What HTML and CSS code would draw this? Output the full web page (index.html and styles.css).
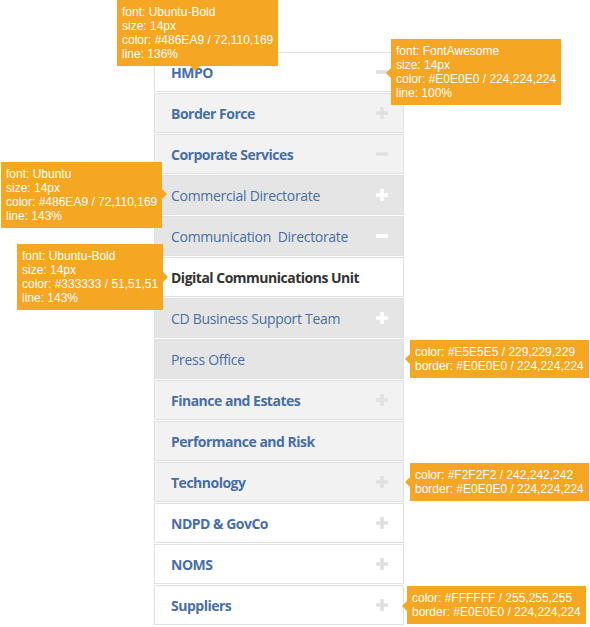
FILE: index.html
```html
<!DOCTYPE html>
<html lang="en">
<head>
<meta charset="utf-8">
<title>Menu</title>
<link rel="stylesheet" href="styles.css">
</head>
<body>
<div class="page">
  <ul class="nav">
    <li class="item bg-white"><span class="label bold">HMPO</span><svg class="ic ic-gray" viewBox="0 0 12 12"><rect y="4.2" width="12" height="3.6"/></svg></li>
    <li class="item bg-light"><span class="label bold">Border Force</span><svg class="ic ic-gray" viewBox="0 0 12 12"><path d="M4.2 0h3.6v4.2H12v3.6H7.8V12H4.2V7.8H0V4.2h4.2z"/></svg></li>
    <li class="item bg-light"><span class="label bold">Corporate Services</span><svg class="ic ic-gray" viewBox="0 0 12 12"><rect y="4.2" width="12" height="3.6"/></svg></li>
    <li class="item bg-mid"><span class="label">Commercial Directorate</span><svg class="ic ic-white" viewBox="0 0 12 12"><path d="M4.2 0h3.6v4.2H12v3.6H7.8V12H4.2V7.8H0V4.2h4.2z"/></svg></li>
    <li class="item bg-mid"><span class="label">Communication&nbsp; Directorate</span><svg class="ic ic-white" viewBox="0 0 12 12"><rect y="4.2" width="12" height="3.6"/></svg></li>
    <li class="item bg-white"><span class="label bold current">Digital Communications Unit</span></li>
    <li class="item bg-mid"><span class="label">CD Business Support Team</span><svg class="ic ic-white" viewBox="0 0 12 12"><path d="M4.2 0h3.6v4.2H12v3.6H7.8V12H4.2V7.8H0V4.2h4.2z"/></svg></li>
    <li class="item bg-mid"><span class="label">Press Office</span></li>
    <li class="item bg-light"><span class="label bold">Finance and Estates</span><svg class="ic ic-gray" viewBox="0 0 12 12"><path d="M4.2 0h3.6v4.2H12v3.6H7.8V12H4.2V7.8H0V4.2h4.2z"/></svg></li>
    <li class="item bg-light"><span class="label bold">Performance and Risk</span></li>
    <li class="item bg-light"><span class="label bold">Technology</span><svg class="ic ic-gray" viewBox="0 0 12 12"><path d="M4.2 0h3.6v4.2H12v3.6H7.8V12H4.2V7.8H0V4.2h4.2z"/></svg></li>
    <li class="item bg-white"><span class="label bold">NDPD &amp; GovCo</span><svg class="ic ic-gray" viewBox="0 0 12 12"><path d="M4.2 0h3.6v4.2H12v3.6H7.8V12H4.2V7.8H0V4.2h4.2z"/></svg></li>
    <li class="item bg-white"><span class="label bold">NOMS</span><svg class="ic ic-gray" viewBox="0 0 12 12"><path d="M4.2 0h3.6v4.2H12v3.6H7.8V12H4.2V7.8H0V4.2h4.2z"/></svg></li>
    <li class="item bg-white"><span class="label bold">Suppliers</span><svg class="ic ic-gray" viewBox="0 0 12 12"><path d="M4.2 0h3.6v4.2H12v3.6H7.8V12H4.2V7.8H0V4.2h4.2z"/></svg></li>
  </ul>

  <div class="tip tip-down t1">font: Ubuntu-Bold<br>size: 14px<br>color: #486EA9 / 72,110,169<br>line: 136%</div>
  <div class="tip tip-left t2">font: FontAwesome<br>size: 14px<br>color: #E0E0E0 / 224,224,224<br>line: 100%</div>
  <div class="tip tip-right t3">font: Ubuntu<br>size: 14px<br>color: #486EA9 / 72,110,169<br>line: 143%</div>
  <div class="tip tip-right t4">font: Ubuntu-Bold<br>size: 14px<br>color: #333333 / 51,51,51<br>line: 143%</div>
  <div class="tip tip-left t5">color: #E5E5E5 / 229,229,229<br>border: #E0E0E0 / 224,224,224</div>
  <div class="tip tip-left t6">color: #F2F2F2 / 242,242,242<br>border: #E0E0E0 / 224,224,224</div>
  <div class="tip tip-left t7">color: #FFFFFF / 255,255,255<br>border: #E0E0E0 / 224,224,224</div>
</div>
</body>
</html>
```

FILE: styles.css
```css
html, body {
  margin: 0;
  padding: 0;
  background: #ffffff;
}

.page {
  position: relative;
  width: 590px;
  height: 627px;
  padding: 52px 0 0 154px;
  box-sizing: border-box;
}

.nav {
  list-style: none;
  margin: 0;
  padding: 0;
  width: 250px;
  display: flex;
  flex-direction: column;
  gap: 1px;
}

.item {
  display: flex;
  align-items: center;
  justify-content: space-between;
  height: 40px;
  box-sizing: border-box;
  border: 1px solid #e0e0e0;
  padding: 0 15px 0 16px;
}

.bg-white { background: #ffffff; }
.bg-light { background: #f2f2f2; }
.bg-mid { background: #e5e5e5; }

.label {
  font-family: "Open Sans", "Noto Sans", sans-serif;
  font-size: 14px;
  line-height: 20px;
  padding-top: 2px;
  color: #486ea9;
  font-weight: 400;
  letter-spacing: -0.3px;
  white-space: nowrap;
}

.label.bold {
  font-weight: 700;
  letter-spacing: -0.5px;
}

.label.current {
  color: #333333;
}

.ic {
  width: 12px;
  height: 12px;
  flex: none;
  fill: currentColor;
}

.ic-gray { color: #e0e0e0; }
.ic-white { color: #ffffff; }

.tip {
  position: absolute;
  background: #f5a623;
  color: #ffffff;
  font-family: "Liberation Sans", Arial, sans-serif;
  font-size: 12px;
  line-height: 14px;
  padding: 5px;
  white-space: nowrap;
}

.tip::after {
  content: "";
  position: absolute;
  width: 0;
  height: 0;
  border: 5px solid transparent;
}

.tip-down::after {
  top: 100%;
  left: 73px;
  border-top-color: #f5a623;
}

.tip-left::after {
  right: 100%;
  border-right-color: #f5a623;
}

.tip-right::after {
  left: 100%;
  border-left-color: #f5a623;
}

.t1 { left: 117px; top: 0; }
.t2 { left: 391px; top: 39px; }
.t2::after { top: 29px; }
.t3 { left: 1px; top: 162px; }
.t3::after { top: 27px; }
.t4 { left: 17px; top: 244px; }
.t4::after { top: 28px; }
.t5 { left: 410px; top: 340px; }
.t5::after { top: 14px; }
.t6 { left: 410px; top: 463px; }
.t6::after { top: 14px; }
.t7 { left: 407px; top: 586px; }
.t7::after { top: 15px; }
```
